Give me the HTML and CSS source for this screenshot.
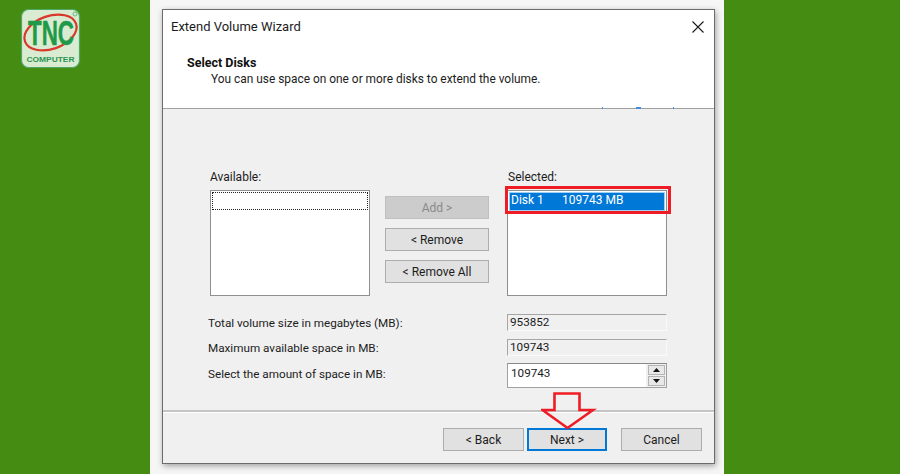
FILE: index.html
```html
<!DOCTYPE html>
<html lang="en">
<head>
<meta charset="utf-8">
<title>Extend Volume Wizard</title>
<link rel="stylesheet" href="styles.css">
</head>
<body>
<div class="stage">
  <svg class="logo" width="62" height="62" viewBox="0 0 62 62" aria-label="TNC Computer">
    <rect x="1.5" y="1.5" width="58" height="58" rx="7" fill="#d9ecd2" stroke="#4fa868" stroke-width="1.2"/>
    <ellipse cx="30.5" cy="24.5" rx="27" ry="16.5" transform="rotate(-19 30.5 24.5)" fill="none" stroke="#d8392b" stroke-width="2.2"/>
    <g transform="translate(31 37) scale(0.64 1)"><text class="logo-tnc" text-anchor="middle">TNC</text></g>
    <g transform="translate(30.5 54) scale(1.12 1)"><text class="logo-sub" text-anchor="middle">COMPUTER</text></g>
    <circle cx="55" cy="6" r="2" fill="none" stroke="#4fa868" stroke-width="0.8"/>
  </svg>
  <main class="sheet">
    <section class="dialog">
      <header class="head">
        <div class="titlebar">
          <span class="title">Extend Volume Wizard</span>
          <svg class="close" width="12" height="12" viewBox="0 0 12 12"><path d="M0.5 0.5 L11.5 11.5 M11.5 0.5 L0.5 11.5" stroke="#1a1a1a" stroke-width="1.1" fill="none"/></svg>
        </div>
        <h1 class="heading">Select Disks</h1>
        <p class="subheading">You can use space on one or more disks to extend the volume.</p>
        <i class="tick tick-a"></i><i class="tick tick-b"></i><i class="tick tick-c"></i>
      </header>
      <div class="content">
        <div class="pickers">
          <div class="picker">
            <div class="label">Available:</div>
            <div class="listbox"><div class="focus-row"></div></div>
          </div>
          <div class="actions">
            <button class="btn btn-off">Add &gt;</button>
            <button class="btn">&lt; Remove</button>
            <button class="btn">&lt; Remove All</button>
          </div>
          <div class="picker picker-selected">
            <div class="label">Selected:</div>
            <div class="listbox"><div class="sel-row"><span class="disk">Disk 1</span><span>109743 MB</span></div></div>
            <div class="callout"></div>
          </div>
        </div>
        <div class="form">
          <div class="form-row"><span>Total volume size in megabytes (MB):</span><div class="readout">953852</div></div>
          <div class="form-row"><span>Maximum available space in MB:</span><div class="readout">109743</div></div>
          <div class="form-row form-row-spin"><span>Select the amount of space in MB:</span>
            <div class="spin">
              <div class="spin-input">109743</div>
              <div class="spin-btns">
                <div class="spin-btn"><svg width="7" height="4" viewBox="0 0 7 4"><path d="M3.5 0 L7 4 L0 4 Z" fill="#111"/></svg></div>
                <div class="spin-btn"><svg width="7" height="4" viewBox="0 0 7 4"><path d="M0 0 L7 0 L3.5 4 Z" fill="#111"/></svg></div>
              </div>
            </div>
          </div>
        </div>
      </div>
      <footer class="foot">
        <button class="btn btn-nav">&lt; Back</button>
        <button class="btn btn-nav btn-primary">Next &gt;</button>
        <button class="btn btn-nav btn-cancel">Cancel</button>
      </footer>
      <svg class="arrow" width="56" height="39" viewBox="0 0 56 39"><path d="M13.5 1.5 H38.5 V18 H52 L26.5 36 L1.5 18 H13.5 Z" fill="none" stroke="#ee1c25" stroke-width="2.6"/></svg>
    </section>
  </main>
</div>
</body>
</html>
```
FILE: styles.css
```css
* { box-sizing: border-box; }
html, body { margin: 0; padding: 0; }
body { width: 900px; height: 474px; overflow: hidden; font-family: Roboto, "Open Sans", sans-serif; color: #1c1c1c; }
.stage { position: relative; width: 900px; height: 474px; background: #448c12; padding-left: 150px; }
.logo { position: absolute; left: 20px; top: 8px; }
.logo-tnc { font-family: "Liberation Sans", sans-serif; font-weight: 700; font-size: 35px; fill: #1f9a48; stroke: #1f9a48; stroke-width: 0.5px; }
.logo-sub { font-family: "Liberation Sans", sans-serif; font-weight: 700; font-size: 7.5px; fill: #2a9450; }
.sheet { width: 574px; height: 474px; background: #f6f6f6; padding: 9px 9px 10px 12px; }
.dialog { position: relative; width: 553px; height: 455px; background: #f0f0f0; border: 1px solid #6c6c6c; box-shadow: 1px 2px 6px rgba(0,0,0,.35); display: flex; flex-direction: column; }
.head { position: relative; height: 99px; background: #fff; border-bottom: 1px solid #a0a0a0; padding: 8px 10px 0 8px; flex: none; }
.titlebar { display: flex; justify-content: space-between; align-items: center; height: 17px; }
.title { font-size: 13px; }
.close { margin-top: 1px; }
.heading { margin: 19px 0 0 16px; font-size: 12.5px; font-weight: 700; line-height: 17px; color: #111; }
.subheading { margin: 0 0 0 40px; font-size: 11.9px; line-height: 17px; }
.tick { position: absolute; bottom: -1px; height: 2px; width: 1px; background: #3f8fdf; }
.tick-a { left: 439px; }
.tick-b { left: 473px; width: 5px; }
.tick-c { left: 510px; }
.content { flex: none; height: 301px; padding: 61px 47px 0 47px; }
.pickers { display: grid; grid-template-columns: 175px 122px 160px; }
.picker { position: relative; display: flex; flex-direction: column; }
.label { font-size: 12px; line-height: 14px; height: 14px; margin-bottom: 6px; }
.picker-selected .label { padding-left: 1px; }
.listbox { height: 106px; background: #fff; border: 1px solid #8e8f8f; padding: 1px; width: 160px; }
.focus-row { height: 18px; border: 1px dotted #222; }
.sel-row { display: flex; height: 19px; background: #0078d7; color: #fff; font-size: 12px; line-height: 14px; padding-left: 1px; border: 1px solid #9fd0f4; }
.disk { width: 51px; }
.callout { position: absolute; left: -2px; top: 16px; width: 166px; height: 28px; border: 3px solid #ee1c25; }
.actions { display: flex; flex-direction: column; gap: 9px; padding-top: 26px; width: 104px; }
.btn { font-family: inherit; font-size: 12px; color: #1c1c1c; background: #e1e1e1; border: 1px solid #adadad; height: 23px; padding: 0; display: block; width: 100%; }
.btn-off { background: #cccccc; border-color: #bfbfbf; color: #8a8a8a; }
.form { margin-top: 18px; display: flex; flex-direction: column; margin-left: -2px; }
.form-row { display: flex; justify-content: space-between; align-items: center; height: 17px; margin-bottom: 8px; font-size: 11.7px; }
.form-row-spin { height: 25px; margin-bottom: 0; margin-top: -1px; }
.form-row-spin > span { margin-top: -3px; }
.readout { width: 160px; height: 17px; line-height: 15px; background: #f0f0f0; border: 1px solid #a6a6a6; border-right-color: #f8f8f8; border-bottom-color: #fafafa; padding-left: 2px; }
.spin { width: 160px; height: 25px; display: flex; background: #fff; border: 1px solid #a0a0a0; border-top-color: #8a8a8a; }
.spin-input { flex: 1; padding: 1px 0 0 3px; line-height: 17px; }
.spin-btns { width: 20px; background: #f0f0f0; display: flex; flex-direction: column; gap: 1px; padding: 1px 1px 1px 2px; }
.spin-btn { flex: 1; background: #e8e8e8; border: 1px solid #b4b4b4; display: flex; align-items: center; justify-content: center; }
.foot { flex: 1; border-top: 2px solid #c4c4c4; box-shadow: inset 0 1px 0 #fff; display: flex; align-items: flex-start; padding: 16px 12px 0 280px; }
.btn-nav { width: 81px; height: 23px; flex: none; }
.btn-primary { margin-left: 3px; width: 80px; border: 2px solid #0078d7; }
.btn-cancel { margin-left: 14px; }
.arrow { position: absolute; left: 378px; top: 382px; }
```
